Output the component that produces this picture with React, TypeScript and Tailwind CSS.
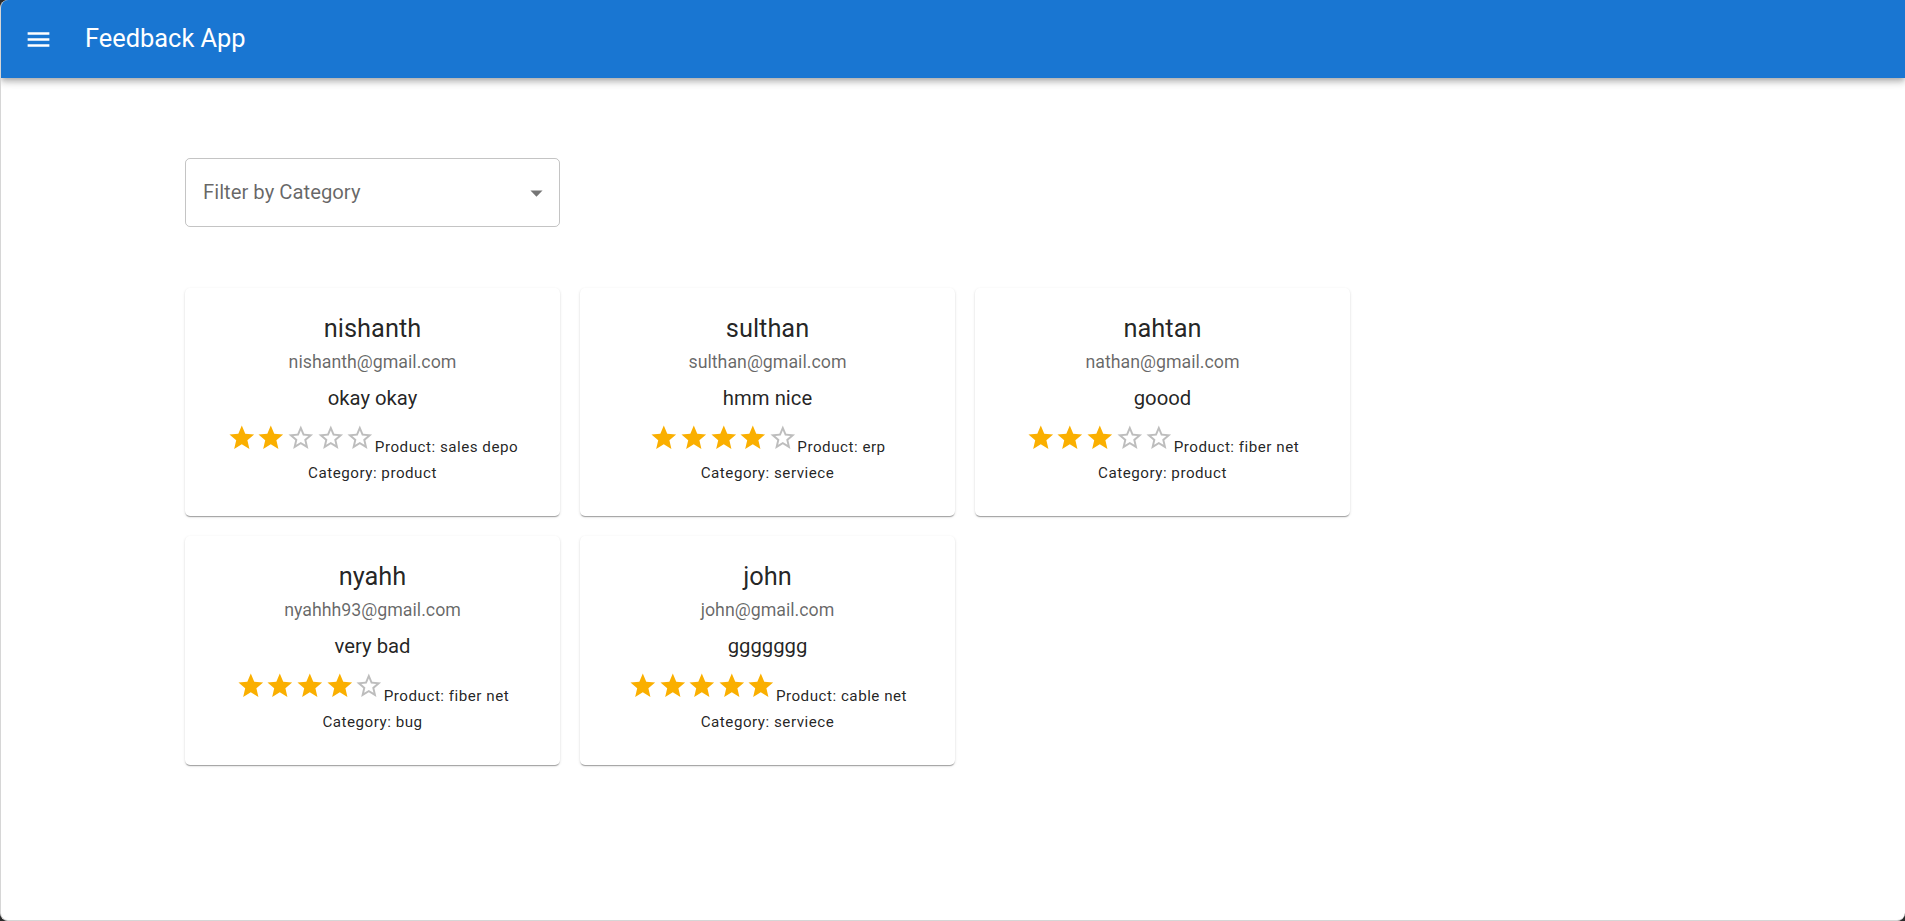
import React from "react";

type Fb = { name: string; email: string; text: string; rating: number; product: string; category: string };

const data: Fb[] = [
  { name: "nishanth", email: "nishanth@gmail.com", text: "okay okay", rating: 2, product: "sales depo", category: "product" },
  { name: "sulthan", email: "sulthan@gmail.com", text: "hmm nice", rating: 4, product: "erp", category: "serviece" },
  { name: "nahtan", email: "nathan@gmail.com", text: "goood", rating: 3, product: "fiber net", category: "product" },
  { name: "nyahh", email: "nyahhh93@gmail.com", text: "very bad", rating: 4, product: "fiber net", category: "bug" },
  { name: "john", email: "john@gmail.com", text: "ggggggg", rating: 5, product: "cable net", category: "serviece" },
];

function Star({ filled }: { filled: boolean }) {
  return (
    <svg viewBox="0 0 24 24" className="w-[29.6px] h-[29.6px] shrink-0" fill={filled ? "#faaf00" : "rgba(0,0,0,0.26)"}>
      {filled ? (
        <path d="M12 17.27L18.18 21l-1.64-7.03L22 9.24l-7.19-.61L12 2 9.19 8.63 2 9.24l5.46 4.73L5.82 21z" />
      ) : (
        <path d="M22 9.24l-7.19-.62L12 2 9.19 8.63 2 9.24l5.46 4.73L5.82 21 12 17.27 18.18 21l-1.63-7.03L22 9.24zM12 15.4l-3.76 2.27 1-4.28-3.32-2.88 4.38-.38L12 6.1l1.71 4.04 4.38.38-3.32 2.88 1 4.28L12 15.4z" />
      )}
    </svg>
  );
}

function Card({ f }: { f: Fb }) {
  return (
    <div className="bg-white rounded-[5px] shadow-[0px_2px_1px_-1px_rgba(0,0,0,0.2),0px_1px_1px_0px_rgba(0,0,0,0.14),0px_1px_3px_0px_rgba(0,0,0,0.12)] px-[19px] pt-[21px] pb-[30.8px] flex flex-col items-center text-center">
      <div className="text-[25.4px] leading-[38.9px] font-normal text-[rgba(0,0,0,0.87)]">{f.name}</div>
      <div className="text-[17.8px] leading-[27.8px] text-[rgba(0,0,0,0.6)]">{f.email}</div>
      <div className="mt-[7.9px] text-[20.3px] leading-[29.2px] text-[rgba(0,0,0,0.87)]">{f.text}</div>
      <div className="mt-[9.8px] flex items-end justify-center">
        <div className="flex">
          {[1, 2, 3, 4, 5].map((i) => (
            <Star key={i} filled={i <= f.rating} />
          ))}
        </div>
        <span className="-mb-[3.5px] text-[15.2px] leading-none tracking-[0.5px] text-[rgba(0,0,0,0.87)]">Product: {f.product}</span>
      </div>
      <div className="mt-[9.2px] text-[15.2px] leading-[24.2px] tracking-[0.5px] text-[rgba(0,0,0,0.87)]">Category: {f.category}</div>
    </div>
  );
}

export default function App() {
  return (
    <div className="w-[1905px] h-[921px] bg-[#2a2a2a] overflow-hidden" style={{ fontFamily: "Roboto, 'Liberation Sans', sans-serif" }}>
      <div className="h-full bg-white rounded-tl-[8px] rounded-bl-[8px] rounded-br-[8px] border-l border-b border-[#d6d6d6] overflow-hidden">
        <header className="relative z-10 h-[78px] bg-[#1976d2] flex items-center pl-[23px] shadow-[0px_2px_5px_-1px_rgba(0,0,0,0.2),0px_5px_6px_0px_rgba(0,0,0,0.14),0px_1px_12px_0px_rgba(0,0,0,0.12)]">
          <svg viewBox="0 0 24 24" className="w-[29px] h-[29px]" fill="#fff">
            <path d="M3 18h18v-2H3zm0-5h18v-2H3zm0-7v2h18V6z" />
          </svg>
          <div className="ml-[32px] text-white text-[25.4px] font-normal leading-none">Feedback App</div>
        </header>
        <main className="pl-[184px] pt-[80px]">
          <div className="relative w-[375px] h-[69px] rounded-[5px] border border-[rgba(0,0,0,0.23)] flex items-center pl-[17px]">
            <span className="text-[20.3px] text-[rgba(0,0,0,0.6)]">Filter by Category</span>
            <svg viewBox="0 0 24 24" className="absolute right-[8px] top-1/2 -translate-y-1/2 w-[29px] h-[29px]" fill="rgba(0,0,0,0.54)">
              <path d="M7 10l5 5 5-5z" />
            </svg>
          </div>
          <div className="mt-[61px] grid grid-cols-[repeat(3,375px)] gap-[20px]">
            {data.map((f) => (
              <Card key={f.name} f={f} />
            ))}
          </div>
        </main>
      </div>
    </div>
  );
}
